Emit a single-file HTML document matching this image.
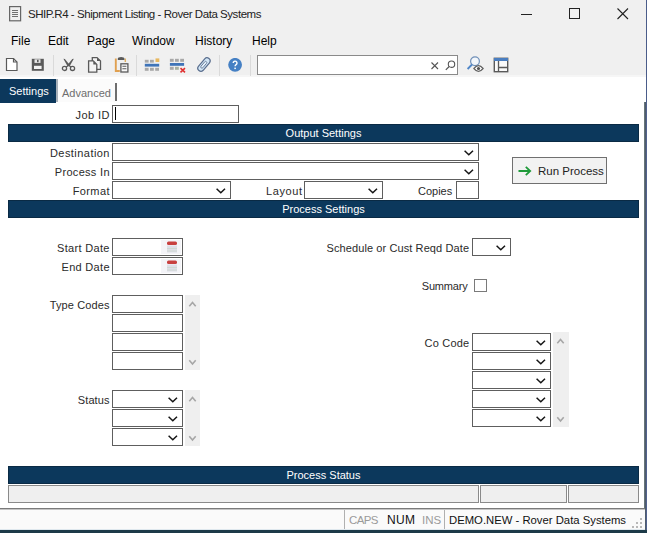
<!DOCTYPE html>
<html><head><meta charset="utf-8">
<style>
*{box-sizing:border-box;margin:0;padding:0}
html,body{width:647px;height:533px;overflow:hidden;background:#fff;font-family:"Liberation Sans",sans-serif}
.a{position:absolute}
.t{position:absolute;white-space:nowrap;color:#000;font-size:12px;line-height:14px}
.f{position:absolute;white-space:nowrap;color:#2a2a2a;font-size:11px;line-height:13px}
.fr{position:absolute;white-space:nowrap;color:#2a2a2a;font-size:11px;line-height:13px;text-align:right}
.hdr{position:absolute;left:8px;width:631px;height:18px;background:#0c385c;border:1px solid #0a2a44;color:#fff;font-size:11px;line-height:16px;text-align:center}
.inp{position:absolute;border:1px solid #5e5e5e;background:#fff;height:18px}
.sel{position:absolute;border:1px solid #5e5e5e;background:#fff;height:18px}
.sel svg{position:absolute;right:4px;top:6px}
.sb{position:absolute;background:#efefef;width:15px}
.sep{position:absolute;top:55px;width:1px;height:21px;background:#dadada}
</style></head><body>
<div class="a" style="left:0;top:0;width:647px;height:75px;background:#f0f0f0"></div>
<div class="a" style="left:0;top:75px;width:647px;height:2px;background:#f6f6f6"></div>
<!-- title bar -->
<svg class="a" style="left:9px;top:6px" width="13" height="16" viewBox="0 0 13 16">
<rect x="0.6" y="0.6" width="11" height="14.2" fill="none" stroke="#666" stroke-width="1.2"/>
<path d="M3 4.5h6M3 6.5h6M3 8.5h6M3 10.5h6" stroke="#707070" stroke-width="1"/>
</svg>
<div class="t" style="left:28px;top:7px;color:#222;font-size:11.5px;letter-spacing:-0.45px">SHIP.R4 - Shipment Listing - Rover Data Systems</div>
<div class="a" style="left:521px;top:14px;width:11px;height:1px;background:#222"></div>
<svg class="a" style="left:569px;top:8px" width="12" height="12"><rect x="0.5" y="0.5" width="10" height="10" fill="none" stroke="#222"/></svg>
<svg class="a" style="left:617px;top:8px" width="12" height="12"><path d="M0.5 0.5L11 11M11 0.5L0.5 11" stroke="#222" stroke-width="1.1"/></svg>
<div class="a" style="left:646px;top:0;width:1px;height:102px;background:#4a5c8a"></div>
<div class="a" style="left:644px;top:102px;width:3px;height:431px;background:linear-gradient(90deg,#66747a 0,#66747a 1px,#4e5c6c 1px,#4e5c6c 2px,#52628e 2px)"></div>
<!-- menu -->
<div class="t" style="left:11px;top:34px">File</div>
<div class="t" style="left:48px;top:34px">Edit</div>
<div class="t" style="left:87px;top:34px">Page</div>
<div class="t" style="left:132px;top:34px">Window</div>
<div class="t" style="left:195px;top:34px">History</div>
<div class="t" style="left:252px;top:34px">Help</div>
<!-- toolbar -->
<div class="sep" style="left:53px"></div>
<div class="sep" style="left:136px"></div>
<div class="sep" style="left:219px"></div>
<div class="sep" style="left:250px"></div>
<!-- new -->
<svg class="a" style="left:5px;top:57px" width="14" height="15" viewBox="0 0 14 15">
<path d="M1.5 1.5h7l3.5 3.5v8.5h-10.5z" fill="#fff" stroke="#5a5a5a" stroke-width="1.2"/>
<path d="M8.5 1.5v3.5h3.5" fill="none" stroke="#5a5a5a" stroke-width="1.2"/>
</svg>
<!-- save -->
<svg class="a" style="left:31px;top:58px" width="14" height="14" viewBox="0 0 14 14">
<rect x="0.8" y="0.8" width="12" height="12" fill="#5a5a5a"/>
<rect x="3.5" y="1.3" width="6" height="3.6" fill="#e8e8e8"/>
<rect x="6" y="1.8" width="1.6" height="2.4" fill="#5a5a5a"/>
<rect x="3" y="7.8" width="7.6" height="3.2" fill="#f4f4f4"/>
</svg>
<!-- cut -->
<svg class="a" style="left:61px;top:57px" width="15" height="15" viewBox="0 0 15 15">
<path d="M2.4 1.8L3.9 2.1L9.2 8.6L6.4 8.9Z" fill="#5a5a5a"/>
<path d="M12.8 1.8L11.3 2.1L6 8.6L8.8 8.9Z" fill="#5a5a5a"/>
<path d="M7.6 8.4L5 10M7.6 8.4L10.2 10" stroke="#5a5a5a" stroke-width="1.2"/>
<circle cx="3.5" cy="11.4" r="2.1" fill="none" stroke="#5a5a5a" stroke-width="1.3"/>
<circle cx="11.5" cy="11.4" r="2.1" fill="none" stroke="#5a5a5a" stroke-width="1.3"/>
</svg>
<!-- copy -->
<svg class="a" style="left:87px;top:56px" width="15" height="17" viewBox="0 0 15 17">
<path d="M5.3 1.6h4.7l3.5 3.5v8.3h-8.2z" fill="#f4f4f4" stroke="#5a5a5a" stroke-width="1.3"/>
<path d="M10 1.6v3.5h3.5z" fill="#5a5a5a"/>
<path d="M1.6 4.9h4.7l3.5 3.5v7.8h-8.2z" fill="#f4f4f4" stroke="#5a5a5a" stroke-width="1.3"/>
<path d="M6.3 4.9v3.5h3.5z" fill="#5a5a5a"/>
</svg>
<!-- paste -->
<svg class="a" style="left:114px;top:56px" width="16" height="17" viewBox="0 0 16 17">
<path d="M1.8 2.5v12.5h4" fill="none" stroke="#e0a050" stroke-width="1.9"/>
<path d="M11.3 2.5v3.5" fill="none" stroke="#e0b060" stroke-width="1.4"/>
<path d="M3.8 3.9v-1.2q0 -1.8 3.3 -1.8q3.3 0 3.3 1.8v1.2z" fill="#5a5a5a"/>
<rect x="6.9" y="7.8" width="7" height="8.2" fill="#f8f8f8" stroke="#5a5a5a" stroke-width="1.3"/>
<path d="M8.4 10.2h4M8.4 12.8h4" stroke="#5a5a5a" stroke-width="1.1"/>
</svg>
<!-- insert rows -->
<svg class="a" style="left:144px;top:58px" width="17" height="14" viewBox="0 0 17 14">
<rect x="0.8" y="1.8" width="3.8" height="2.8" fill="#a8a8a8"/><rect x="6" y="1.8" width="3.8" height="2.8" fill="#a8a8a8"/>
<rect x="11.5" y="0.4" width="3.8" height="3.6" fill="#e8b860"/>
<rect x="0.8" y="5.8" width="14.4" height="2.8" fill="#3f74b8"/>
<rect x="0.8" y="9.8" width="3.8" height="3" fill="#a8a8a8"/><rect x="6" y="9.8" width="3.8" height="3" fill="#a8a8a8"/><rect x="11.2" y="9.8" width="3.8" height="3" fill="#a8a8a8"/>
</svg>
<!-- delete rows -->
<svg class="a" style="left:169px;top:58px" width="18" height="15" viewBox="0 0 18 15">
<rect x="0.9" y="0.8" width="3.8" height="3" fill="#a8a8a8"/><rect x="6" y="0.8" width="3.8" height="3" fill="#a8a8a8"/><rect x="11.2" y="0.8" width="3.8" height="3" fill="#a8a8a8"/>
<rect x="0.9" y="5" width="14.2" height="2.8" fill="#3f74b8"/>
<rect x="0.9" y="8.8" width="3.8" height="3" fill="#a8a8a8"/><rect x="6" y="8.8" width="3.8" height="3" fill="#a8b0a0"/>
<path d="M11.5 10.2L16 14.3M16 10.2L11.5 14.3" stroke="#e03030" stroke-width="1.6"/>
</svg>
<!-- paperclip -->
<svg class="a" style="left:196px;top:56px" width="16" height="17" viewBox="0 0 16 17">
<path d="M2.43 10.31L8.73 2.81A3.1 3.1 0 0 1 13.47 6.79L7.17 14.29A3.1 3.1 0 0 1 2.43 10.31Z" fill="#d2e6f6" stroke="#5a6e8e" stroke-width="1.25"/>
<path d="M4.98 10.23L8.68 5.83A1.2 1.2 0 0 1 10.52 7.37L6.82 11.77A1.2 1.2 0 0 1 4.98 10.23Z" fill="#e4f0fa" stroke="#6a7e9c" stroke-width="1"/>
</svg>
<!-- help -->
<svg class="a" style="left:228px;top:58px" width="15" height="15" viewBox="0 0 15 15">
<circle cx="7.1" cy="6.8" r="6.9" fill="#4580c4"/>
<path d="M5.2 5.1a1.9 1.9 0 1 1 2.9 1.6c-0.5 0.3 -1 0.7 -1 1.6" fill="none" stroke="#fff" stroke-width="1.4"/>
<rect x="6.35" y="9.6" width="1.5" height="1.5" fill="#fff"/>
</svg>
<!-- search -->
<div class="a" style="left:257px;top:55px;width:201px;height:20px;border:1px solid #8a8a8a;background:#fff"></div>
<svg class="a" style="left:431px;top:62px" width="8" height="8"><path d="M0.5 0.5L7 7M7 0.5L0.5 7" stroke="#555" stroke-width="1.1"/></svg>
<svg class="a" style="left:445px;top:60px" width="11" height="11" viewBox="0 0 11 11"><circle cx="6.5" cy="4.2" r="3.2" fill="none" stroke="#555" stroke-width="1.1"/><path d="M4.2 6.5L0.8 9.9" stroke="#555" stroke-width="1.2"/></svg>
<svg class="a" style="left:466px;top:56px" width="18" height="17" viewBox="0 0 18 17">
<circle cx="9" cy="5.3" r="4.4" fill="#f2f6fb" stroke="#7090b8" stroke-width="1.2"/>
<path d="M6 8.5L1.6 13" stroke="#4f86c8" stroke-width="1.8"/>
<path d="M7.9 12.5q4.6 -5.6 9.2 0q-4.6 5.6 -9.2 0z" fill="#fff" stroke="#606060" stroke-width="1.2"/>
<circle cx="12.5" cy="12.5" r="1.6" fill="#505050"/>
</svg>
<svg class="a" style="left:493px;top:57px" width="16" height="16" viewBox="0 0 16 16">
<rect x="1.3" y="1.3" width="13.4" height="13.4" fill="#fafafa" stroke="#5a5a5a" stroke-width="1.4"/>
<rect x="1" y="1" width="14" height="3" fill="#4a7ec0"/>
<path d="M5.5 4v10.5M5.5 10.5h9" stroke="#5a5a5a" stroke-width="1.3"/>
</svg>
<!-- tabs -->
<div class="a" style="left:0;top:79px;width:56px;height:24px;background:#0c385c;color:#fff;font-size:11px;line-height:14px;padding:5px 0 0 9px">Settings</div>
<div class="a" style="left:56px;top:79px;width:2px;height:23px;background:#a8b0b8"></div>
<div class="a" style="left:58px;top:79px;width:57px;height:23px;background:#fbfbfb"></div>
<div class="a" style="left:62px;top:86px;color:#6e6e6e;font-size:11px;line-height:14px;white-space:nowrap">Advanced</div>
<div class="a" style="left:115px;top:83px;width:2px;height:18px;background:#6e6e6e"></div>

<div class="fr" style="left:0;width:109.95px;top:109px;letter-spacing:0.45px">Job ID</div>
<div class="inp" style="left:112px;top:105px;width:127px"></div>
<div class="a" style="left:115px;top:107px;width:1px;height:13px;background:#000"></div>

<div class="hdr" style="top:124px">Output Settings</div>
<div class="fr" style="left:0;width:109.95px;top:147px;letter-spacing:0.45px">Destination</div>
<div class="sel" style="left:112px;top:143px;width:367px"><svg width="10" height="6" viewBox="0 0 10 6"><path d="M0.6 0.8L4.8 4.8L9 0.8" fill="none" stroke="#151515" stroke-width="1.5"/></svg></div>
<div class="fr" style="left:0;width:109.80px;top:166px;letter-spacing:0.3px">Process In</div>
<div class="sel" style="left:112px;top:162px;width:367px"><svg width="10" height="6" viewBox="0 0 10 6"><path d="M0.6 0.8L4.8 4.8L9 0.8" fill="none" stroke="#151515" stroke-width="1.5"/></svg></div>
<div class="fr" style="left:0;width:109.90px;top:185px;letter-spacing:0.4px">Format</div>
<div class="sel" style="left:112px;top:181px;width:119px"><svg width="10" height="6" viewBox="0 0 10 6"><path d="M0.6 0.8L4.8 4.8L9 0.8" fill="none" stroke="#151515" stroke-width="1.5"/></svg></div>
<div class="f" style="left:266px;top:185px;letter-spacing:0.6px">Layout</div>
<div class="sel" style="left:304px;top:181px;width:79px"><svg width="10" height="6" viewBox="0 0 10 6"><path d="M0.6 0.8L4.8 4.8L9 0.8" fill="none" stroke="#151515" stroke-width="1.5"/></svg></div>
<div class="f" style="left:418px;top:185px">Copies</div>
<div class="inp" style="left:456px;top:181px;width:23px"></div>
<div class="a" style="left:512px;top:157px;width:95px;height:27px;border:1px solid #707070;background:#f2f2f2"></div>
<svg class="a" style="left:518px;top:166px" width="14" height="10" viewBox="0 0 14 10"><path d="M0.5 5H12M7.8 0.8L12.2 5L7.8 9.2" fill="none" stroke="#1f9a3a" stroke-width="1.8"/></svg>
<div class="f" style="left:538px;top:164px;color:#222;font-size:11.5px;line-height:14px">Run Process</div>

<div class="hdr" style="top:200px">Process Settings</div>
<div class="fr" style="left:0;width:109.83px;top:242px;letter-spacing:0.33px">Start Date</div>
<div class="inp" style="left:112px;top:238px;width:71px"></div>
<div class="fr" style="left:0;width:109.80px;top:261px;letter-spacing:0.3px">End Date</div>
<div class="inp" style="left:112px;top:257px;width:71px"></div>
<svg class="a" style="left:161px;top:240px" width="20" height="14" viewBox="0 0 20 14"><rect width="20" height="14" fill="#f4f4f8"/><rect x="6" y="1.5" width="10" height="3.5" rx="1.5" fill="#c84040"/><rect x="6" y="5.5" width="10" height="7" fill="#dedee8"/><path d="M6 8.5h10M6 11h10" stroke="#ccd8cc" stroke-width="0.8"/></svg>
<svg class="a" style="left:161px;top:259px" width="20" height="14" viewBox="0 0 20 14"><rect width="20" height="14" fill="#f4f4f8"/><rect x="6" y="1.5" width="10" height="3.5" rx="1.5" fill="#c84040"/><rect x="6" y="5.5" width="10" height="7" fill="#dedee8"/><path d="M6 8.5h10M6 11h10" stroke="#ccd8cc" stroke-width="0.8"/></svg>
<div class="fr" style="left:300px;width:169.1px;top:242px;letter-spacing:0.1px">Schedule or Cust Reqd Date</div>
<div class="sel" style="left:472px;top:238px;width:39px"><svg width="10" height="6" viewBox="0 0 10 6"><path d="M0.6 0.8L4.8 4.8L9 0.8" fill="none" stroke="#151515" stroke-width="1.5"/></svg></div>
<div class="fr" style="left:300px;width:167.6px;top:280px;letter-spacing:-0.17px">Summary</div>
<div class="a" style="left:474px;top:279px;width:13px;height:13px;border:1px solid #7a7a7a;background:#fff"></div>

<div class="fr" style="left:0;width:109.62px;top:299px;letter-spacing:0.12px">Type Codes</div>
<div class="inp" style="left:112px;top:295px;width:71px"></div>
<div class="inp" style="left:112px;top:314px;width:71px"></div>
<div class="inp" style="left:112px;top:333px;width:71px"></div>
<div class="inp" style="left:112px;top:352px;width:71px"></div>
<svg class="a" style="left:185px;top:295px" width="15" height="75"><rect width="15" height="75" fill="#efefef"/><path d="M4.3 11.2L7.5 7.5L10.7 11.2" fill="none" stroke="#a6a6a6" stroke-width="1.6"/><path d="M4.3 65.3L7.5 69L10.7 65.3" fill="none" stroke="#a6a6a6" stroke-width="1.6"/></svg>

<div class="fr" style="left:0;width:109.60px;top:394px;letter-spacing:0.1px">Status</div>
<div class="sel" style="left:112px;top:390px;width:71px"><svg width="10" height="6" viewBox="0 0 10 6"><path d="M0.6 0.8L4.8 4.8L9 0.8" fill="none" stroke="#151515" stroke-width="1.5"/></svg></div>
<div class="sel" style="left:112px;top:409px;width:71px"><svg width="10" height="6" viewBox="0 0 10 6"><path d="M0.6 0.8L4.8 4.8L9 0.8" fill="none" stroke="#151515" stroke-width="1.5"/></svg></div>
<div class="sel" style="left:112px;top:428px;width:71px"><svg width="10" height="6" viewBox="0 0 10 6"><path d="M0.6 0.8L4.8 4.8L9 0.8" fill="none" stroke="#151515" stroke-width="1.5"/></svg></div>
<svg class="a" style="left:185px;top:390px" width="15" height="56"><rect width="15" height="56" fill="#efefef"/><path d="M4.3 11.2L7.5 7.5L10.7 11.2" fill="none" stroke="#a6a6a6" stroke-width="1.6"/><path d="M4.3 46.3L7.5 50L10.7 46.3" fill="none" stroke="#a6a6a6" stroke-width="1.6"/></svg>

<div class="fr" style="left:300px;width:169.4px;top:337px;letter-spacing:0.2px">Co Code</div>
<div class="sel" style="left:472px;top:333px;width:79px"><svg width="10" height="6" viewBox="0 0 10 6"><path d="M0.6 0.8L4.8 4.8L9 0.8" fill="none" stroke="#151515" stroke-width="1.5"/></svg></div>
<div class="sel" style="left:472px;top:352px;width:79px"><svg width="10" height="6" viewBox="0 0 10 6"><path d="M0.6 0.8L4.8 4.8L9 0.8" fill="none" stroke="#151515" stroke-width="1.5"/></svg></div>
<div class="sel" style="left:472px;top:371px;width:79px"><svg width="10" height="6" viewBox="0 0 10 6"><path d="M0.6 0.8L4.8 4.8L9 0.8" fill="none" stroke="#151515" stroke-width="1.5"/></svg></div>
<div class="sel" style="left:472px;top:390px;width:79px"><svg width="10" height="6" viewBox="0 0 10 6"><path d="M0.6 0.8L4.8 4.8L9 0.8" fill="none" stroke="#151515" stroke-width="1.5"/></svg></div>
<div class="sel" style="left:472px;top:409px;width:79px"><svg width="10" height="6" viewBox="0 0 10 6"><path d="M0.6 0.8L4.8 4.8L9 0.8" fill="none" stroke="#151515" stroke-width="1.5"/></svg></div>
<svg class="a" style="left:553px;top:332px" width="16" height="95"><rect width="16" height="95" fill="#efefef"/><path d="M4.3 11.2L7.5 7.5L10.7 11.2" fill="none" stroke="#a6a6a6" stroke-width="1.6"/><path d="M4.3 85.3L7.5 89L10.7 85.3" fill="none" stroke="#a6a6a6" stroke-width="1.6"/></svg>

<div class="hdr" style="top:466px">Process Status</div>
<div class="a" style="left:8px;top:485px;width:471px;height:18px;border:1px solid #8a8a8a;background:#efefef"></div>
<div class="a" style="left:480px;top:485px;width:87px;height:18px;border:1px solid #8a8a8a;background:#efefef"></div>
<div class="a" style="left:568px;top:485px;width:71px;height:18px;border:1px solid #8a8a8a;background:#efefef"></div>

<!-- status bar -->
<div class="a" style="left:0;top:508px;width:645px;height:22px;background:#fafafa;border-top:1px solid #7a7a7a"></div>
<div class="a" style="left:0;top:509px;width:645px;height:1px;background:#c4c4c4"></div>
<div class="a" style="left:0;top:530px;width:647px;height:3px;background:#1c3a48"></div>
<div class="a" style="left:0;top:529px;width:645px;height:1px;background:#dfe8ee"></div>
<div class="a" style="left:344px;top:510px;width:1px;height:19px;background:#b0b0b0"></div>
<div class="a" style="left:444px;top:510px;width:1px;height:19px;background:#b0b0b0"></div>
<div class="t" style="left:349px;top:513px;color:#9a9a9a;font-size:11.5px;letter-spacing:-0.6px">CAPS</div>
<div class="t" style="left:387px;top:513px;font-size:12px;letter-spacing:0.3px;color:#111">NUM</div>
<div class="t" style="left:422px;top:513px;color:#9a9a9a;font-size:11.5px">INS</div>
<div class="t" style="left:449px;top:513px;font-size:11.3px;color:#111">DEMO.NEW - Rover Data Systems</div>
<svg class="a" style="left:632px;top:517px" width="12" height="12"><g fill="#b8b8b8"><rect x="8" y="1" width="2" height="2"/><rect x="4" y="5" width="2" height="2"/><rect x="8" y="5" width="2" height="2"/><rect x="0" y="9" width="2" height="2"/><rect x="4" y="9" width="2" height="2"/><rect x="8" y="9" width="2" height="2"/></g></svg>
</body></html>
